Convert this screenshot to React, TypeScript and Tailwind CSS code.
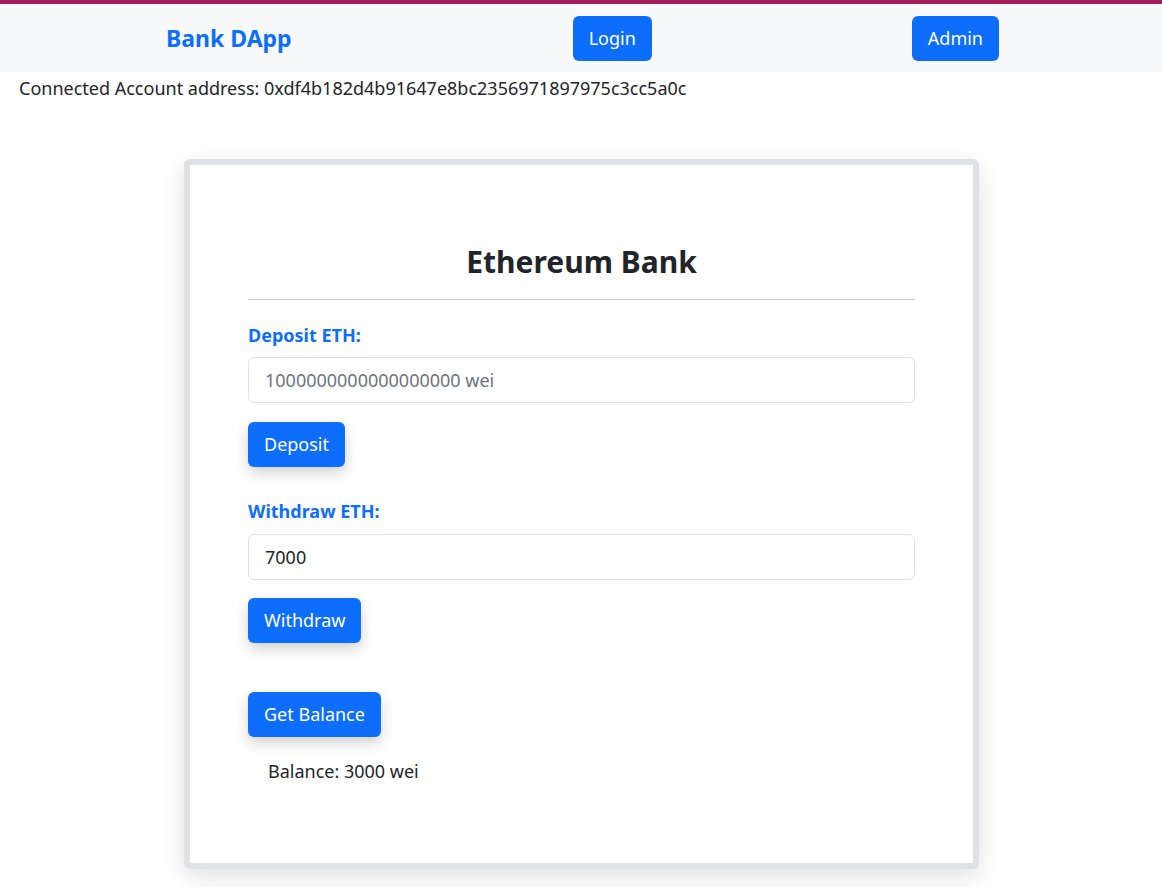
import React from 'react'

const font = { fontFamily: '"Noto Sans", "Open Sans", sans-serif' }

const BlueButton = ({ label }: { label: string }) => (
  <button className="h-[45px] px-4 rounded-md bg-[#0d6efd] text-white text-[18px] shadow-[0_6px_14px_rgba(0,0,0,0.18)]">
    {label}
  </button>
)

const App = () => {
  return (
    <div className="min-h-screen bg-white text-[#212529]" style={font}>
      <div className="h-[4px] bg-[#a31b58]" />
      <nav className="h-[68px] bg-[#f8f9fa] flex items-center">
        <div className="ml-[166px] text-[23px] font-bold text-[#0d6efd]">Bank DApp</div>
        <button className="ml-[281px] h-[45px] px-4 rounded-md bg-[#0d6efd] text-white text-[18px]">Login</button>
        <button className="ml-[260px] h-[45px] px-4 rounded-md bg-[#0d6efd] text-white text-[18px]">Admin</button>
      </nav>
      <div className="pl-[19px] pt-[3px] text-[18px] leading-[27px]">
        Connected Account address: 0xdf4b182d4b91647e8bc2356971897975c3cc5a0c
      </div>

      <div className="mt-[57px] ml-[184px] w-[795px] h-[710px] border-[6px] border-[#dee2e6] rounded-md bg-white shadow-[0_8px_24px_rgba(0,0,0,0.12)]">
        <div className="px-[58px] pt-[77px]">
          <h2 className="text-center text-[30px] font-bold leading-[40px]">Ethereum Bank</h2>
          <hr className="mt-[17px] border-t border-[#c8c8c8]" />

          <label className="block mt-[22px] text-[18px] font-bold text-[#0d6efd] leading-[27px]">Deposit ETH:</label>
          <input
            className="mt-[8px] w-full h-[46px] px-4 rounded-md border border-[#dee2e6] text-[18px] placeholder:text-[#6c757d] outline-none"
            placeholder="1000000000000000000 wei"
          />
          <div className="mt-[19px]">
            <BlueButton label="Deposit" />
          </div>

          <label className="block mt-[31px] text-[18px] font-bold text-[#0d6efd] leading-[27px]">Withdraw ETH:</label>
          <input
            className="mt-[9px] w-full h-[46px] px-4 rounded-md border border-[#dee2e6] text-[18px] outline-none"
            defaultValue="7000"
          />
          <div className="mt-[18px]">
            <BlueButton label="Withdraw" />
          </div>

          <div className="mt-[49px]">
            <BlueButton label="Get Balance" />
          </div>
          <div className="mt-[21px] pl-[20px] text-[18px] leading-[27px]">Balance: 3000 wei</div>
        </div>
      </div>
    </div>
  )
}

export default App
